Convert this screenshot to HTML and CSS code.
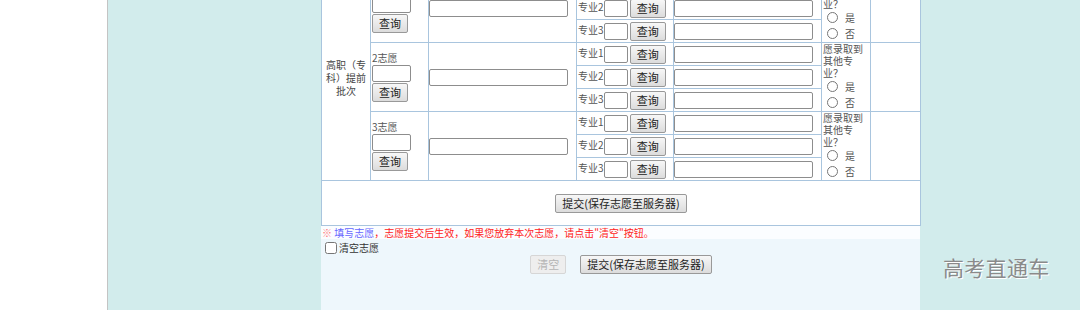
FILE: index.html
```html
<!DOCTYPE html>
<html lang="zh-CN">
  <head>
    <meta charset="UTF-8" />
    <meta name="viewport" content="width=device-width, initial-scale=1.0" />
    <title>填报志愿</title>
    <link rel="stylesheet" href="styles.css">
  </head>
  <body>
    <div class="page">
      <div class="page__side"></div>
      <div class="page__stage">
        <section class="main">
          <table class="form">
            <colgroup>
              <col style="width:49px" />
              <col style="width:58px" />
              <col style="width:148px" />
              <col style="width:97px" />
              <col style="width:148px" />
              <col style="width:49px" />
              <col style="width:50px" />
            </colgroup>
            <!-- 1志愿 -->
            <tr>
              <td rowspan="9" class="batch">高职（专科）提前批次</td>
              <td rowspan="3" class="pick">1志愿<br /><input class="inp inp--code" type="text" /><br /><button class="btn">查询</button></td>
              <td rowspan="3" class="school"><input class="inp inp--wide" type="text" /></td>
              <td class="major">专业1<input class="inp inp--small" type="text" /> <button class="btn">查询</button></td>
              <td class="major-name"><input class="inp inp--wide" type="text" /></td>
              <td rowspan="3" class="adjust">愿录取到其他专业？<br /><label><input type="radio" name="adj1" />是</label><br /><label><input type="radio" name="adj1" />否</label></td>
              <td rowspan="3"></td>
            </tr>
            <tr>
              <td class="major">专业2<input class="inp inp--small" type="text" /> <button class="btn">查询</button></td>
              <td class="major-name"><input class="inp inp--wide" type="text" /></td>
            </tr>
            <tr>
              <td class="major">专业3<input class="inp inp--small" type="text" /> <button class="btn">查询</button></td>
              <td class="major-name"><input class="inp inp--wide" type="text" /></td>
            </tr>
            <!-- 2志愿 -->
            <tr>
              <td rowspan="3" class="pick">2志愿<br /><input class="inp inp--code" type="text" /><br /><button class="btn">查询</button></td>
              <td rowspan="3" class="school"><input class="inp inp--wide" type="text" /></td>
              <td class="major">专业1<input class="inp inp--small" type="text" /> <button class="btn">查询</button></td>
              <td class="major-name"><input class="inp inp--wide" type="text" /></td>
              <td rowspan="3" class="adjust">愿录取到其他专业？<br /><label><input type="radio" name="adj2" />是</label><br /><label><input type="radio" name="adj2" />否</label></td>
              <td rowspan="3"></td>
            </tr>
            <tr>
              <td class="major">专业2<input class="inp inp--small" type="text" /> <button class="btn">查询</button></td>
              <td class="major-name"><input class="inp inp--wide" type="text" /></td>
            </tr>
            <tr>
              <td class="major">专业3<input class="inp inp--small" type="text" /> <button class="btn">查询</button></td>
              <td class="major-name"><input class="inp inp--wide" type="text" /></td>
            </tr>
            <!-- 3志愿 -->
            <tr>
              <td rowspan="3" class="pick">3志愿<br /><input class="inp inp--code" type="text" /><br /><button class="btn">查询</button></td>
              <td rowspan="3" class="school"><input class="inp inp--wide" type="text" /></td>
              <td class="major">专业1<input class="inp inp--small" type="text" /> <button class="btn">查询</button></td>
              <td class="major-name"><input class="inp inp--wide" type="text" /></td>
              <td rowspan="3" class="adjust">愿录取到其他专业？<br /><label><input type="radio" name="adj3" />是</label><br /><label><input type="radio" name="adj3" />否</label></td>
              <td rowspan="3"></td>
            </tr>
            <tr>
              <td class="major">专业2<input class="inp inp--small" type="text" /> <button class="btn">查询</button></td>
              <td class="major-name"><input class="inp inp--wide" type="text" /></td>
            </tr>
            <tr>
              <td class="major">专业3<input class="inp inp--small" type="text" /> <button class="btn">查询</button></td>
              <td class="major-name"><input class="inp inp--wide" type="text" /></td>
            </tr>
            <tr>
              <td colspan="7" class="submit-cell"><button class="btn">提交(保存志愿至服务器)</button></td>
            </tr>
          </table>

          <div class="note">
            <span class="note__mark">※</span>
            <span class="note__hint">填写志愿</span>，志愿提交后生效，如果您放弃本次志愿，请点击"清空"按钮。
          </div>

          <div class="tools">
            <label class="tools__check"><input type="checkbox" />清空志愿</label>
            <div class="tools__buttons">
              <button class="btn" disabled>清空</button>
              <button class="btn">提交(保存志愿至服务器)</button>
            </div>
          </div>
        </section>
      </div>
    </div>

    <div class="watermark">高考直通车</div>
  </body>
</html>
```

FILE: styles.css
```css
html,
body {
  margin: 0;
  font-family: "Noto Sans CJK SC", sans-serif;
  font-size: 10px;
  color: #555;
  background: #fff;
}

.page {
  display: flex;
  height: 310px;
  overflow: hidden;
}
.page__side {
  width: 107px;
  border-right: 1px solid #c4c4c4;
  background: #fff;
}
.page__stage {
  flex: 1;
  background: #d2ecec;
  padding-left: 213px;
}

.main {
  width: 599px;
  margin-top: -27px;
  background: #eef7fc;
  min-height: 340px;
}

.form {
  width: 599px;
  border-collapse: collapse;
  table-layout: fixed;
  background: #fff;
}
.form td {
  border: 1px solid #a9c5de;
  padding: 0 1px;
  height: 22px;
  vertical-align: middle;
  line-height: 12px;
}
.form td.school,
.form td.major-name {
  padding: 0;
}

.batch {
  text-align: center;
  padding: 0 4px !important;
  color: #444;
  line-height: 13px !important;
}
.pick {
  line-height: 11px;
}
.adjust {
  line-height: 12px;
}
.adjust label {
  display: inline-block;
  height: 16px;
  line-height: 16px;
}
.adjust input {
  width: 11px;
  height: 11px;
  margin: 0 7px 0 4px;
  vertical-align: -1px;
}

.submit-cell {
  height: 44px !important;
  text-align: center;
}

.inp {
  box-sizing: border-box;
  height: 17px;
  margin: 0;
  padding: 0 2px;
  border: 1px solid #8d8d8d;
  border-radius: 2px;
  vertical-align: middle;
  font-size: 10px;
}
.inp--code {
  width: 39px;
  margin: 1px 0 1px 0;
}
.inp--small {
  width: 24px;
}
.inp--wide {
  width: 139px;
}

.btn {
  box-sizing: border-box;
  height: 19px;
  margin: 0;
  padding: 0 6px;
  font-family: "Noto Sans CJK SC", sans-serif;
  font-size: 11px;
  line-height: 15px;
  color: #222;
  border: 1px solid #999;
  border-radius: 2px;
  background: linear-gradient(#f7f7f7, #dcdcdc);
  vertical-align: middle;
}
.btn:disabled {
  color: #b5b5b5;
  border-color: #d6d6d6;
  background: #eeeeee;
}

.note {
  height: 13px;
  line-height: 13px;
  padding-left: 1px;
  background: #fbfdff;
  color: #f22;
  white-space: nowrap;
}
.note__mark {
  color: #f77;
}
.note__hint {
  color: #66f;
}

.tools {
  padding-top: 2px;
}
.tools__check {
  display: flex;
  align-items: center;
  height: 13px;
  color: #333;
}
.tools__check input {
  width: 12px;
  height: 12px;
  margin: 0 2px 0 4px;
}
.tools__buttons {
  display: flex;
  justify-content: center;
  gap: 14px;
  margin-top: 1px;
  padding-left: 1px;
}

.watermark {
  position: absolute;
  left: 943px;
  top: 252px;
  font-family: "Noto Sans CJK SC", sans-serif;
  font-size: 21px;
  color: #8a8a8a;
  text-shadow: 1px 1px 0 #fff;
  letter-spacing: 0.3px;
}
```
